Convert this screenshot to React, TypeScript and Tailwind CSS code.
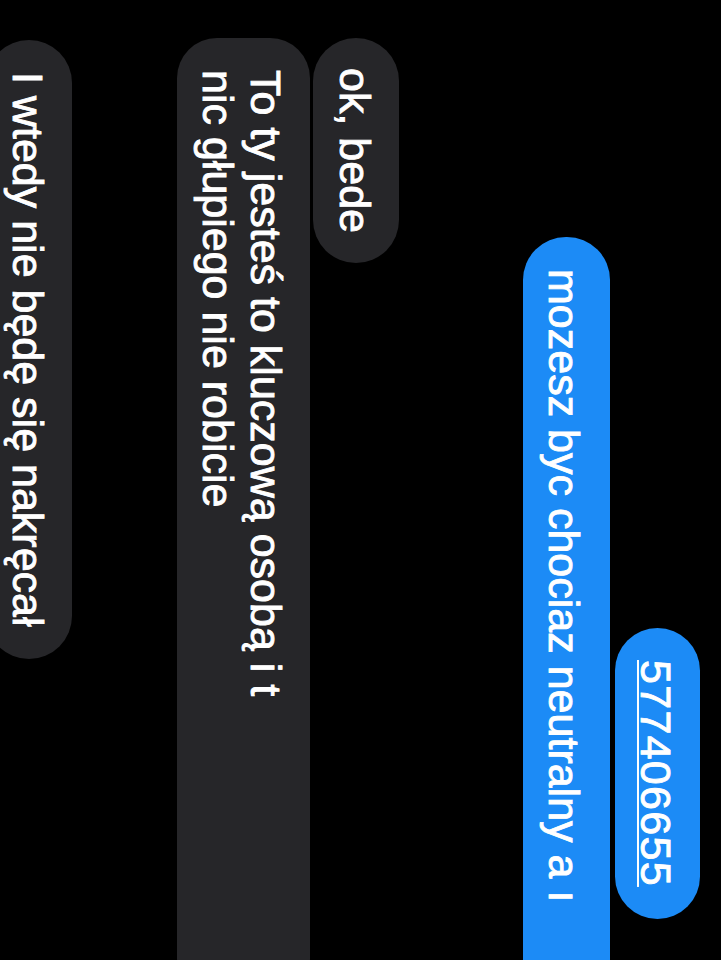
import React from "react";

const font = { fontFamily: '"Liberation Sans", Arial, Helvetica, sans-serif' };

export default function App() {
  return (
    <div className="relative w-[721px] h-[960px] overflow-hidden bg-black" style={font}>
      <div className="absolute left-[721px] top-0 w-[960px] h-[721px] origin-top-left rotate-90 flex flex-col text-white text-[43px] leading-[48px] whitespace-nowrap [-webkit-text-stroke:0.9px_white]">
        {/* row 1: phone number */}
        <div className="flex mt-[21px] pl-[628px]">
          <div className="shrink-0 h-[85px] pt-[20px] px-[32px] rounded-[43px] bg-[#1c8bf6]">
            <span className="underline decoration-2 underline-offset-[2px] tracking-[1.3px]">577406655</span>
          </div>
        </div>
        {/* row 2: blue message */}
        <div className="flex mt-[5px] pl-[237px]">
          <div className="shrink-0 w-[780px] h-[87px] pt-[22px] pl-[32px] rounded-[43px] bg-[#1c8bf6]">
            mozesz byc chociaz neutralny a ı
          </div>
        </div>
        {/* row 3: ok, bede */}
        <div className="flex mt-[124px] pl-[38px]">
          <div className="shrink-0 h-[86px] pt-[20px] px-[30px] rounded-[43px] bg-[#262629]">
            ok, bede
          </div>
        </div>
        {/* row 4: two-line gray */}
        <div className="flex mt-[3px] pl-[38px]">
          <div className="shrink-0 w-[960px] h-[133px] pt-[20px] pl-[32px] rounded-[40px] bg-[#262629]">
            <div>To ty jesteś to kluczową osobą i t</div>
            <div>nic głupiego nie robicie</div>
          </div>
        </div>
        {/* row 5: last gray */}
        <div className="flex mt-[105px] pl-[40px]">
          <div className="shrink-0 h-[86px] pt-[20px] px-[32px] rounded-[43px] bg-[#262629]">
            I wtedy nie będę się nakręcał
          </div>
        </div>
      </div>
    </div>
  );
}
